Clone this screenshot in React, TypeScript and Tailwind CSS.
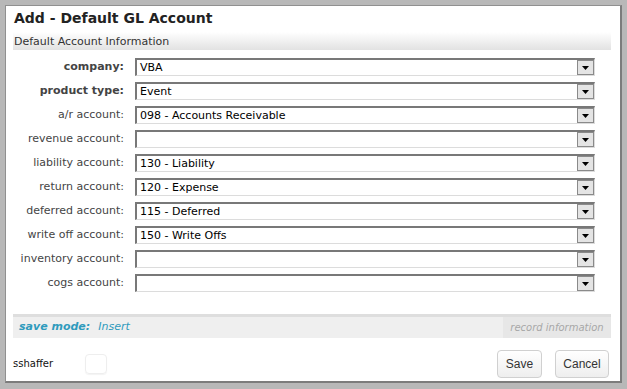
const rows = [
  { label: 'company:', value: 'VBA', bold: true },
  { label: 'product type:', value: 'Event', bold: true },
  { label: 'a/r account:', value: '098 - Accounts Receivable' },
  { label: 'revenue account:', value: '' },
  { label: 'liability account:', value: '130 - Liability' },
  { label: 'return account:', value: '120 - Expense' },
  { label: 'deferred account:', value: '115 - Deferred' },
  { label: 'write off account:', value: '150 - Write Offs' },
  { label: 'inventory account:', value: '' },
  { label: 'cogs account:', value: '' },
];

function Select({ value }: { value: string }) {
  return (
    <div className="flex h-[18px] w-[460px] border-t-2 border-l-2 border-b border-r border-t-[#787878] border-l-[#787878] border-b-[#dcdcdc] border-r-[#dcdcdc] bg-white">
      <div className="flex-1 pl-[3px] text-[11px] leading-[15px] text-black">{value}</div>
      <div className="flex w-[17px] items-center justify-center border border-[#8a8a8a] bg-[#e4e4e4]">
        <svg width="7" height="4" viewBox="0 0 7 4">
          <path d="M0 0h7L3.5 4z" fill="#000" />
        </svg>
      </div>
    </div>
  );
}

export default function App() {
  return (
    <div className="h-[389px] w-[627px] bg-[#b8b8b8] pt-[5px] pl-[5px] pr-[5px] pb-[6px] font-['DejaVu_Sans',sans-serif]">
      <div className="flex h-full flex-col border-t border-l border-r-2 border-b-2 border-t-[#909090] border-l-[#909090] border-r-[#7c7c7c] border-b-[#7c7c7c] bg-white">
        <div className="h-[26px] pl-[8px] pt-[2px] text-[14px] font-bold leading-[20px] text-[#222]">
          Add - Default GL Account
        </div>

        <div className="ml-[7px] mr-[9px] h-[18px] bg-gradient-to-b from-white to-[#e2e2e2] pl-[1px] pt-[3px] text-[11px] leading-[13px] text-[#333]">
          Default Account Information
        </div>

        <div className="mt-[5px]">
          {rows.map((r) => (
            <div key={r.label} className="flex h-[24px] items-center">
              <div className={`w-[118px] text-right text-[11px] text-[#444] ${r.bold ? 'font-bold' : ''}`}>
                {r.label}
              </div>
              <div className="ml-[11px]">
                <Select value={r.value} />
              </div>
            </div>
          ))}
        </div>

        <div className="ml-[7px] mr-[9px] mt-[19px] flex h-[24px] border-t-[3px] border-[#dedede] bg-[#efefef]">
          <div className="flex flex-1 items-center pl-[6px] text-[11px] italic text-[#2f9bbd]">
            <span className="font-bold">save mode:</span>
            <span className="ml-[8px]">Insert</span>
          </div>
          <div className="flex w-[108px] items-center justify-center bg-[#e7e7e7] text-[10px] italic text-[#a8a8a8]">
            record information
          </div>
        </div>

        <div className="flex flex-1 items-center pl-[7px] pr-[11px] pt-[8px]">
          <span className="text-[10px] text-[#111]">sshaffer</span>
          <div className="ml-[32px] h-[20px] w-[22px] rounded-[4px] border border-[#eeeeee] shadow-[0_1px_1px_rgba(0,0,0,0.05)]" />
          <div className="flex-1" />
          <button className="h-[28px] w-[45px] rounded-[4px] border border-[#d0d0d0] bg-gradient-to-b from-white to-[#eeeeee] font-['Liberation_Sans',sans-serif] text-[12px] text-[#333]">
            Save
          </button>
          <button className="ml-[13px] h-[28px] w-[54px] rounded-[4px] border border-[#d0d0d0] bg-gradient-to-b from-white to-[#eeeeee] font-['Liberation_Sans',sans-serif] text-[12px] text-[#333]">
            Cancel
          </button>
        </div>
      </div>
    </div>
  );
}
